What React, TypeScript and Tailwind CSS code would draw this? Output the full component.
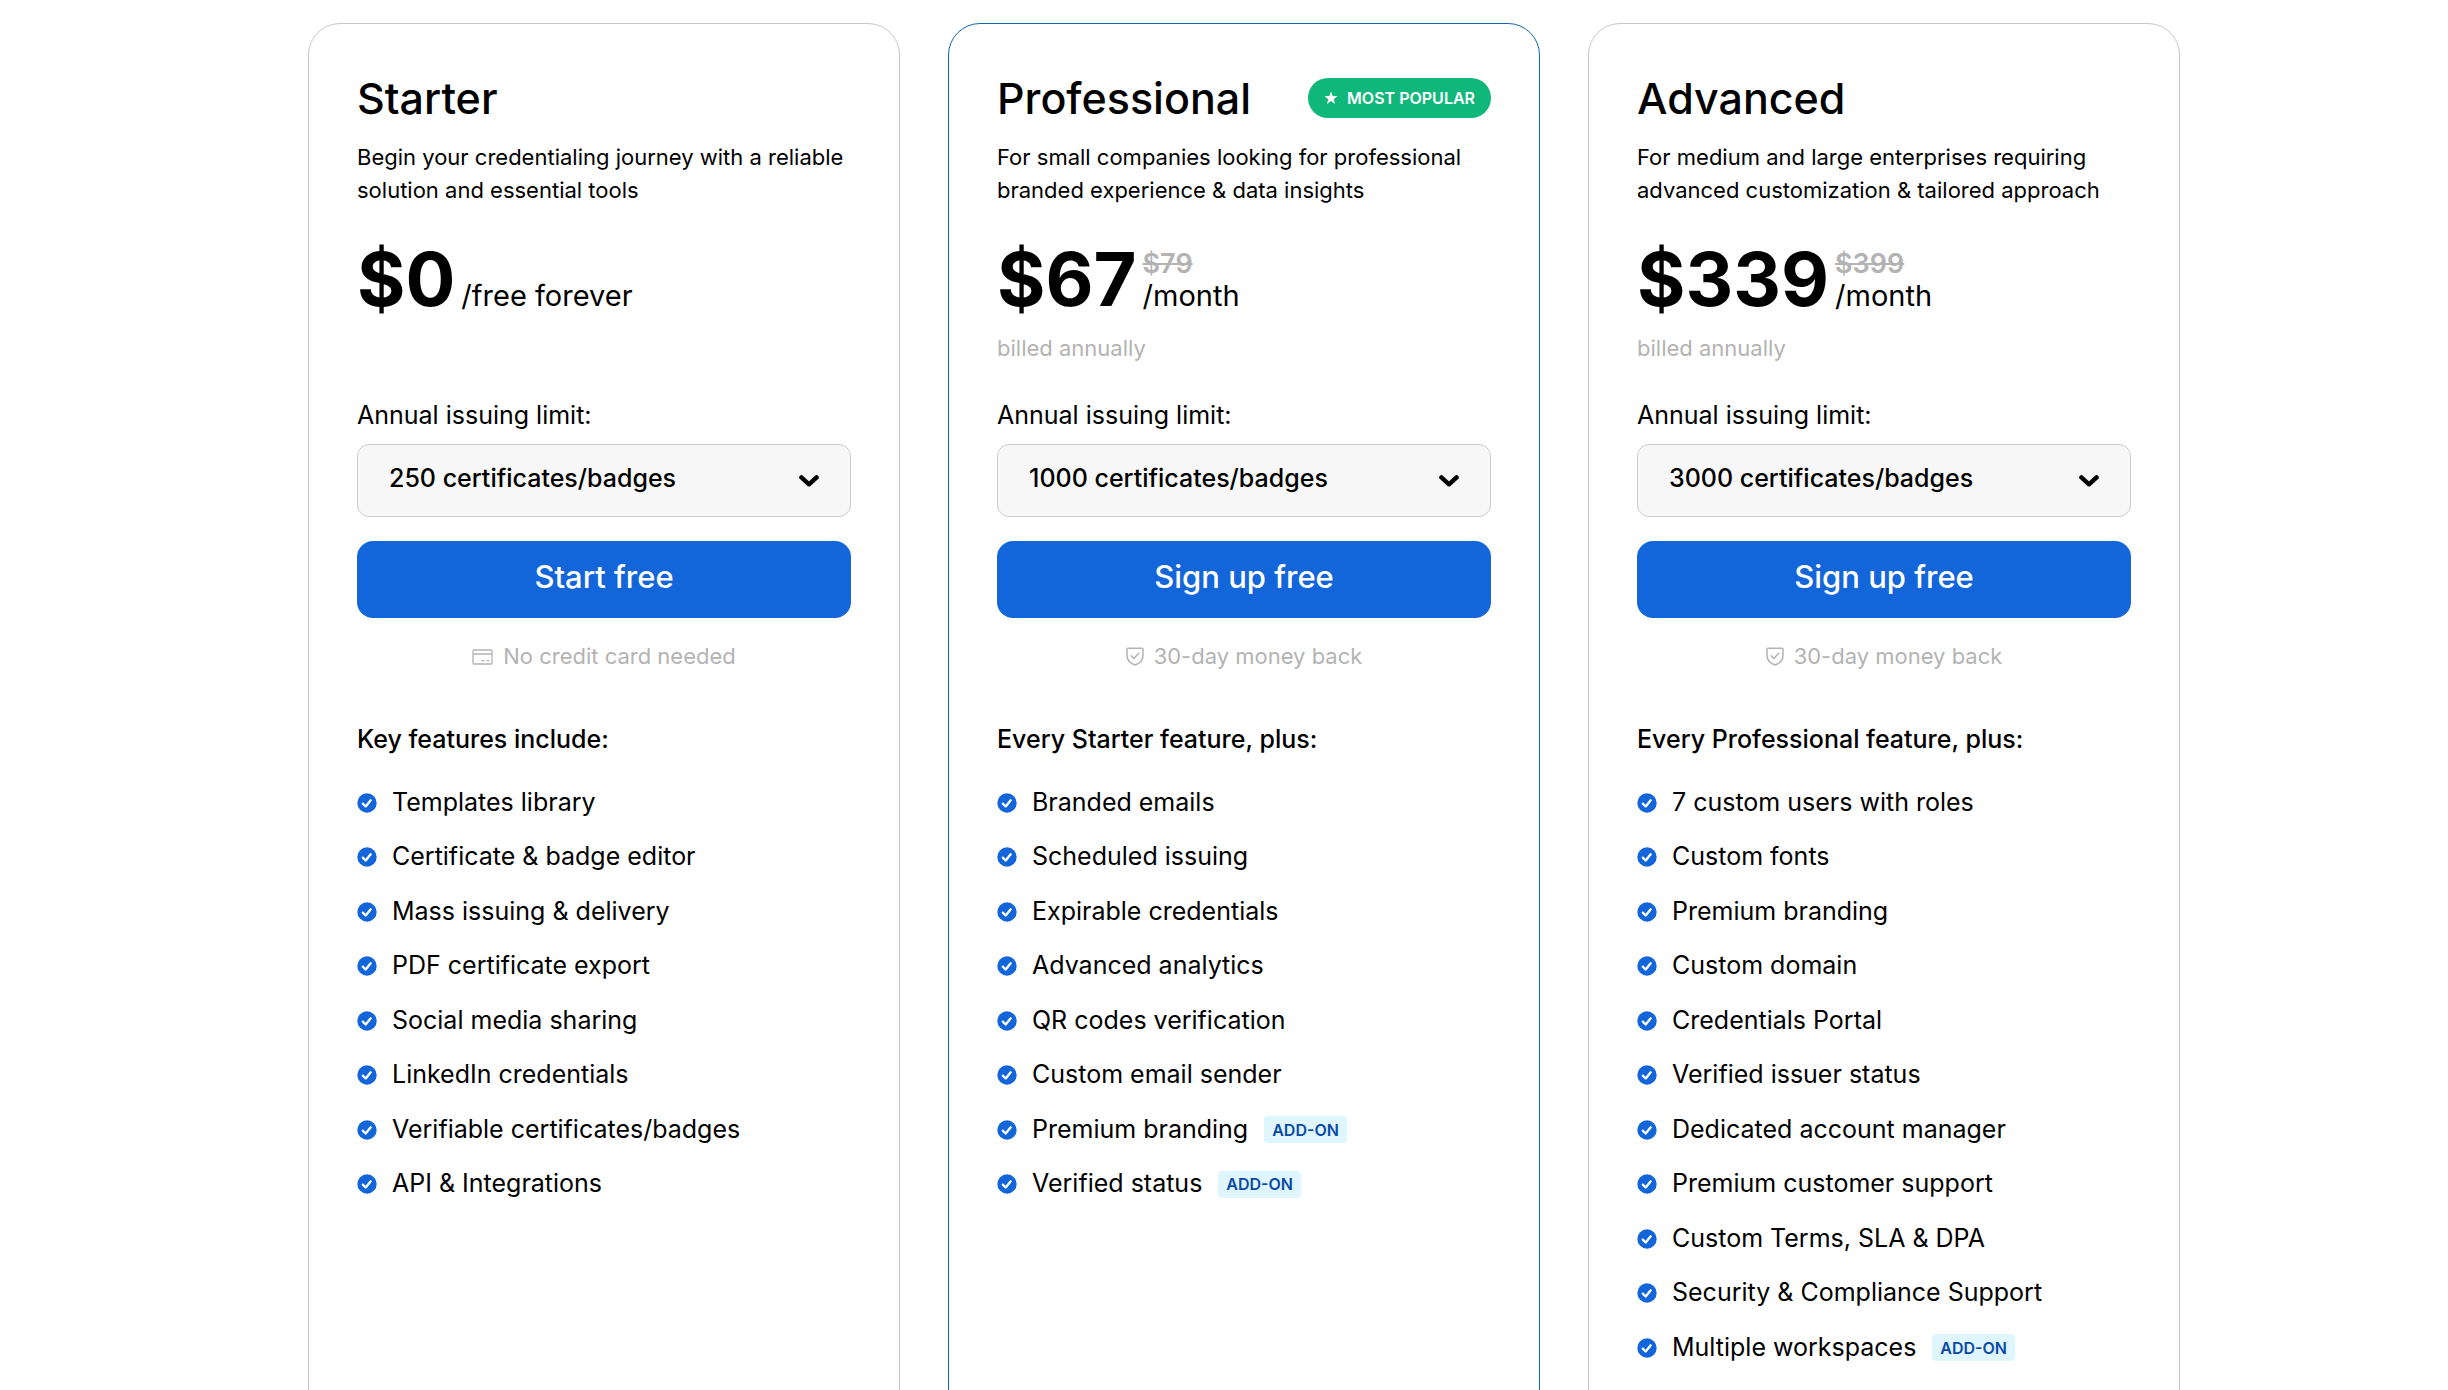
import { useId } from "react";

type Feature = { label: string; addon?: boolean };

type Plan = {
  name: string;
  popular?: boolean;
  description: string;
  price: string;
  oldPrice?: string;
  period: string;
  billing?: string;
  limits: string[];
  cta: string;
  note: string;
  noteIcon: "card" | "shield";
  heading: string;
  features: Feature[];
};

const plans: Plan[] = [
  {
    name: "Starter",
    description: "Begin your credentialing journey with a reliable solution and essential tools",
    price: "$0",
    period: "/free forever",
    limits: ["250 certificates/badges"],
    cta: "Start free",
    note: "No credit card needed",
    noteIcon: "card",
    heading: "Key features include:",
    features: [
      { label: "Templates library" },
      { label: "Certificate & badge editor" },
      { label: "Mass issuing & delivery" },
      { label: "PDF certificate export" },
      { label: "Social media sharing" },
      { label: "LinkedIn credentials" },
      { label: "Verifiable certificates/badges" },
      { label: "API & Integrations" },
    ],
  },
  {
    name: "Professional",
    popular: true,
    description: "For small companies looking for professional branded experience & data insights",
    price: "$67",
    oldPrice: "$79",
    period: "/month",
    billing: "billed annually",
    limits: ["1000 certificates/badges"],
    cta: "Sign up free",
    note: "30-day money back",
    noteIcon: "shield",
    heading: "Every Starter feature, plus:",
    features: [
      { label: "Branded emails" },
      { label: "Scheduled issuing" },
      { label: "Expirable credentials" },
      { label: "Advanced analytics" },
      { label: "QR codes verification" },
      { label: "Custom email sender" },
      { label: "Premium branding", addon: true },
      { label: "Verified status", addon: true },
    ],
  },
  {
    name: "Advanced",
    description: "For medium and large enterprises requiring advanced customization & tailored approach",
    price: "$339",
    oldPrice: "$399",
    period: "/month",
    billing: "billed annually",
    limits: ["3000 certificates/badges"],
    cta: "Sign up free",
    note: "30-day money back",
    noteIcon: "shield",
    heading: "Every Professional feature, plus:",
    features: [
      { label: "7 custom users with roles" },
      { label: "Custom fonts" },
      { label: "Premium branding" },
      { label: "Custom domain" },
      { label: "Credentials Portal" },
      { label: "Verified issuer status" },
      { label: "Dedicated account manager" },
      { label: "Premium customer support" },
      { label: "Custom Terms, SLA & DPA" },
      { label: "Security & Compliance Support" },
      { label: "Multiple workspaces", addon: true },
    ],
  },
];

function StarIcon() {
  return (
    <svg viewBox="0 0 14 14" className="size-[14px] shrink-0 fill-current" aria-hidden="true">
      <path d="M7 .4l1.65 4.7 4.95.1-3.95 3 1.4 4.8L7 10.1 2.95 13l1.4-4.8L.4 5.2l4.95-.1z" />
    </svg>
  );
}

function CheckIcon() {
  return (
    <svg viewBox="0 0 20 20" className="mt-0.5 size-5 shrink-0" fill="none" aria-hidden="true">
      <circle cx="10" cy="10" r="9.7" fill="#1366d9" />
      <path d="M5.8 10.6l2.9 2.9 5-6.2" stroke="#fff" strokeWidth="2.3" strokeLinecap="round" strokeLinejoin="round" />
    </svg>
  );
}

function CardIcon() {
  return (
    <svg viewBox="0 0 21 16" className="h-4 w-[21px] shrink-0" fill="none" stroke="currentColor" strokeWidth="1.3" aria-hidden="true">
      <rect x="1" y="1" width="19" height="14" rx="1" />
      <path d="M1 5h19M9.5 11.7h3M14.5 11.7h3" />
    </svg>
  );
}

function ShieldIcon() {
  return (
    <svg viewBox="0 0 18 19" className="h-[19px] w-[18px] shrink-0" fill="none" stroke="currentColor" strokeWidth="1.5" strokeLinejoin="round" aria-hidden="true">
      <path d="M1.8 1.2h14.4q.8 0 .8.8v6.5c0 4.3-3 7.7-8 9.5-5-1.8-8-5.2-8-9.500V2q0-.8.8-.8z" />
      <path d="M5.4 8.900l2.600 2.600 4.800-5.400" strokeLinecap="round" />
    </svg>
  );
}

function ChevronIcon() {
  return (
    <svg
      viewBox="0 0 20 12"
      className="pointer-events-none absolute top-1/2 right-8 h-3 w-5 -translate-y-1/2"
      fill="none"
      stroke="#000"
      strokeWidth="4.4"
      strokeLinecap="round"
      strokeLinejoin="round"
      aria-hidden="true"
    >
      <path d="M2.4 2.4L10 9.3l7.6-6.9" />
    </svg>
  );
}

function PlanCard({ plan }: { plan: Plan }) {
  const limitId = useId();
  return (
    <article
      className={`flex flex-col rounded-[32px] border bg-white p-12 ${
        plan.popular ? "border-[#1366b0]" : "border-[#c8c8c8]"
      }`}
    >
      <header className="flex items-center justify-between">
        <h2 className="text-[43px] leading-[52px] font-medium">{plan.name}</h2>
        {plan.popular && (
          <span className="flex h-10 items-center gap-[9px] rounded-full bg-[#10b77b] px-4 text-base font-semibold whitespace-nowrap text-white">
            <StarIcon />
            MOST POPULAR
          </span>
        )}
      </header>
      <p className="mt-[17px] text-[22px] leading-[33px]">{plan.description}</p>

      <div className="mt-[31px] flex items-end gap-[6px]">
        <span className="text-[74px] leading-[82px] font-bold">{plan.price}</span>
        <span className="mb-2 flex flex-col leading-8">
          {plan.oldPrice && <s className="text-[27px] font-semibold text-[#b3b3b3]">{plan.oldPrice}</s>}
          <span className="text-[29px]">{plan.period}</span>
        </span>
      </div>
      <p className="mt-3 min-h-[33px] text-[22px] leading-[33px] text-[#b3b3b3]">{plan.billing}</p>

      <label htmlFor={limitId} className="mt-[34px] text-[25px] leading-8">
        Annual issuing limit:
      </label>
      <div className="relative mt-[13px]">
        <select
          id={limitId}
          className="h-[73px] w-full appearance-none rounded-xl border border-[#cccccc] bg-[#f7f7f7] pr-16 pb-1 pl-[31px] text-[25px] font-medium"
        >
          {plan.limits.map((limit) => (
            <option key={limit}>{limit}</option>
          ))}
        </select>
        <ChevronIcon />
      </div>
      <button type="button" className="mt-6 h-[77px] rounded-2xl bg-[#1366d9] pb-1 text-[31px] font-medium text-white">
        {plan.cta}
      </button>
      <p className="mt-[22px] flex items-center justify-center gap-[10px] text-[22px] leading-[33px] text-[#b3b3b3]">
        {plan.noteIcon === "card" ? <CardIcon /> : <ShieldIcon />}
        {plan.note}
      </p>

      <h3 className="mt-[50px] text-[25px] leading-8 font-medium">{plan.heading}</h3>
      <ul className="mt-[19px]">
        {plan.features.map((feature) => (
          <li key={feature.label} className="flex items-center text-[25px] leading-8 odd:h-[55px] even:h-[54px]">
            <CheckIcon />
            <span className="ml-[15px]">{feature.label}</span>
            {feature.addon && (
              <span className="mt-0.5 ml-4 flex h-[27px] items-center rounded bg-[#e0f6fe] px-2 text-base font-semibold text-[#0a49a6]">
                ADD-ON
              </span>
            )}
          </li>
        ))}
      </ul>
    </article>
  );
}

export default function App() {
  return (
    <main className="h-screen overflow-hidden bg-white pt-[23px] pr-[268px] pl-[308px] font-['Inter',sans-serif] text-black">
      <div className="grid grid-cols-3 gap-12">
        {plans.map((plan) => (
          <PlanCard key={plan.name} plan={plan} />
        ))}
      </div>
    </main>
  );
}
